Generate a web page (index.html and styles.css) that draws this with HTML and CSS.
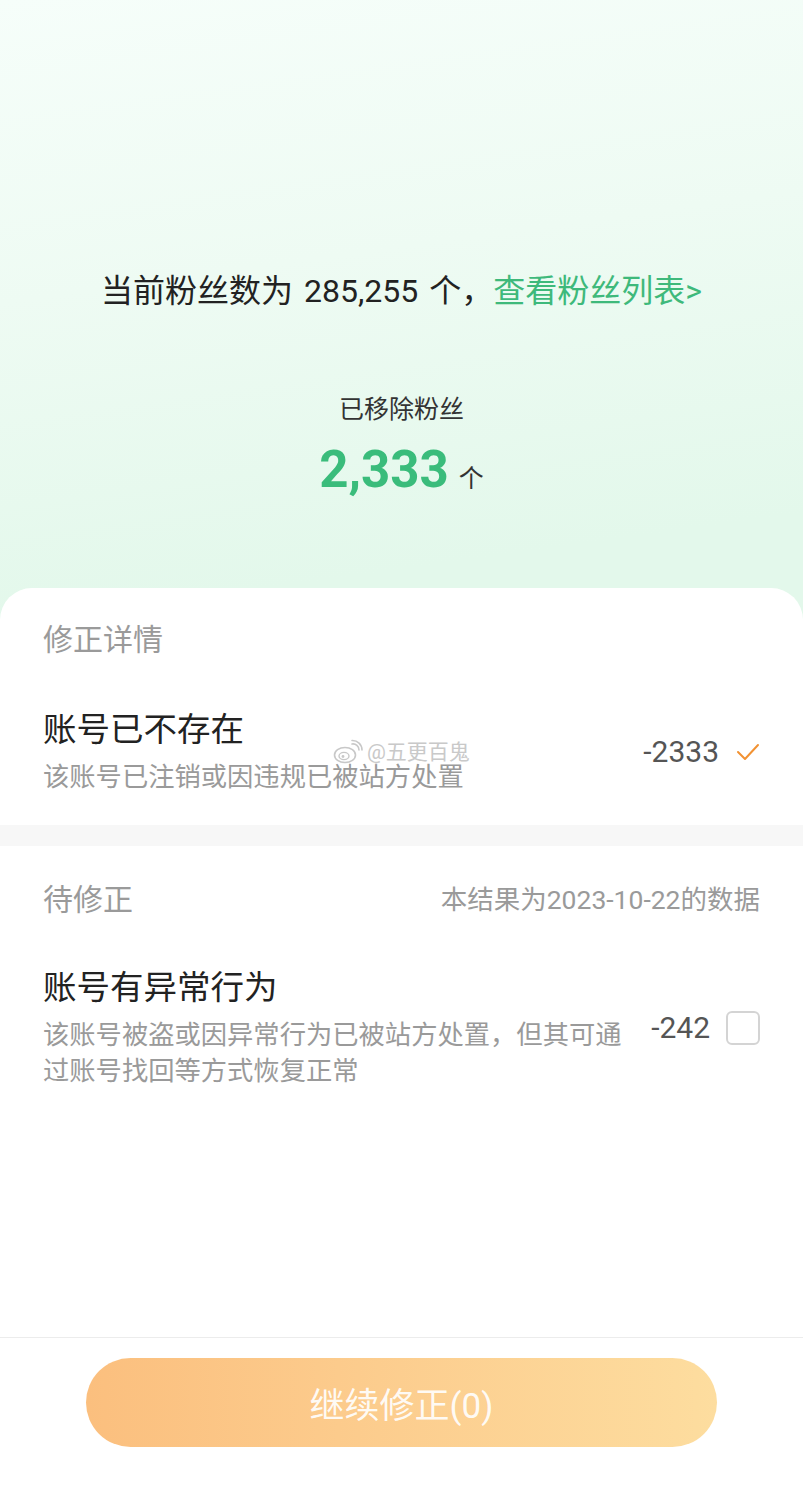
FILE: index.html
```html
<!DOCTYPE html>
<html lang="zh-CN">
<head>
<meta charset="utf-8">
<title>粉丝修正</title>
<link rel="stylesheet" href="styles.css">
</head>
<body>
<div class="page">
  <section class="hero">
    <p class="summary">当前粉丝数为 285,255 个，<a class="link">查看粉丝列表&gt;</a></p>
    <p class="removed-label">已移除粉丝</p>
    <p class="removed-count"><span class="num">2,333</span><span class="unit">个</span></p>
  </section>

  <main class="card">
    <section class="group group-first">
      <div class="group-head"><span class="group-title">修正详情</span></div>
      <div class="item">
        <div class="item-text">
          <div class="item-title">账号已不存在</div>
          <div class="item-desc">该账号已注销或因违规已被站方处置</div>
        </div>
        <div class="item-side">
          <span class="delta">-2333</span>
          <svg class="check" width="24" height="18" viewBox="0 0 24 18"><polyline points="2,9 9,16 22,2" fill="none" stroke="#f29233" stroke-width="2" stroke-linecap="round" stroke-linejoin="round"/></svg>
        </div>
      </div>
    </section>

    <div class="band"></div>

    <section class="group group-second">
      <div class="group-head">
        <span class="group-title">待修正</span>
        <span class="group-note">本结果为2023-10-22的数据</span>
      </div>
      <div class="item">
        <div class="item-text">
          <div class="item-title">账号有异常行为</div>
          <div class="item-desc">该账号被盗或因异常行为已被站方处置，但其可通过账号找回等方式恢复正常</div>
        </div>
        <div class="item-side side-box">
          <span class="delta">-242</span>
          <span class="checkbox"></span>
        </div>
      </div>
    </section>

    <footer class="footer">
      <button class="primary">继续修正(0)</button>
    </footer>
  </main>

  <div class="watermark">
    <svg class="wb-logo" width="30" height="26" viewBox="0 0 30 26">
      <ellipse cx="12" cy="16" rx="10.5" ry="7.5" fill="#fff" stroke="#c8c8c8" stroke-width="1.6"/>
      <ellipse cx="11" cy="17" rx="5" ry="3.6" fill="none" stroke="#c8c8c8" stroke-width="1.4"/>
      <circle cx="10" cy="17.5" r="1.4" fill="#c8c8c8"/>
      <path d="M19 5 A6 6 0 0 1 26 11" fill="none" stroke="#c8c8c8" stroke-width="1.6" stroke-linecap="round"/>
      <path d="M19 1.5 A9.5 9.5 0 0 1 29 11" fill="none" stroke="#c8c8c8" stroke-width="1.6" stroke-linecap="round"/>
    </svg>
    <span class="wb-text">@五更百鬼</span>
  </div>
</div>
</body>
</html>
```

FILE: styles.css
```css
* { box-sizing: border-box; }
html, body { margin: 0; padding: 0; }
body {
  font-family: Roboto, "Noto Sans CJK SC", sans-serif;
  color: #222;
}
p { margin: 0; }

.page {
  position: relative;
  min-height: 100vh;
  display: flex;
  flex-direction: column;
  background: linear-gradient(172deg, #f6fefa 0px, #eefbf3 300px, #e3f8eb 620px, #e3f8eb 100%);
}

.hero {
  height: 588px;
  padding-top: 270px;
  text-align: center;
  flex-shrink: 0;
}
.summary {
  font-size: 32px;
  line-height: 42px;
  word-spacing: 3px;
  color: #222;
}
.link { color: #3eb97b; text-decoration: none; }
.removed-label {
  margin-top: 80px;
  font-size: 25px;
  line-height: 36px;
  color: #333;
}
.removed-count {
  margin-top: 10px;
  line-height: 64px;
}
.num {
  font-size: 51px;
  font-weight: 700;
  color: #3abc7b;
}
.unit {
  font-size: 25px;
  color: #333;
  margin-left: 10px;
}

.card {
  flex: 1;
  display: flex;
  flex-direction: column;
  background: #fff;
  border-radius: 32px 32px 0 0;
}

.group { padding: 0 43px; }
.group-first { padding-top: 32px; padding-bottom: 30px; }
.group-second { padding-top: 34px; }

.group-head {
  display: flex;
  justify-content: space-between;
  align-items: center;
  line-height: 40px;
}
.group-title { font-size: 30px; color: #9a9a9a; }
.group-note { font-size: 26.5px; color: #9a9a9a; }

.item {
  display: flex;
  align-items: center;
}
.group-first .item { margin-top: 48px; }
.group-second .item { margin-top: 46px; }
.item-text { flex: 1; min-width: 0; }
.item-title {
  font-size: 33.5px;
  line-height: 44px;
  color: #222;
}
.item-desc {
  margin-top: 7px;
  font-size: 26.3px;
  line-height: 36px;
  color: #9a9a9a;
}
.item-side {
  flex-shrink: 0;
  margin-left: 12px;
  display: flex;
  align-items: center;
  gap: 17px;
}
.side-box { gap: 16px; }
.delta {
  font-size: 30px;
  color: #555;
}
.check { display: block; }
.checkbox {
  width: 34px;
  height: 34px;
  border: 2px solid #d4d4d4;
  border-radius: 6px;
}

.band {
  height: 21px;
  background: #f7f7f7;
}

.footer {
  margin-top: auto;
  border-top: 1px solid #ececec;
  padding: 20px 86px 57px;
}
.primary {
  display: block;
  width: 100%;
  height: 89px;
  border: 0;
  border-radius: 45px;
  background: linear-gradient(90deg, #fbbf7e 0%, #fccb8c 40%, #fddd9f 100%);
  color: rgba(255, 255, 255, 0.92);
  font-family: Roboto, "Noto Sans CJK SC", sans-serif;
  font-size: 35px;
  padding: 0;
}

.watermark {
  position: absolute;
  left: 333px;
  top: 739px;
  display: flex;
  align-items: center;
  gap: 4px;
  pointer-events: none;
}
.wb-logo { display: block; }
.wb-text {
  font-size: 21px;
  line-height: 26px;
  color: #c9c9c9;
  text-shadow: 0 0 2px #fff, 0 0 2px #fff;
}
```
